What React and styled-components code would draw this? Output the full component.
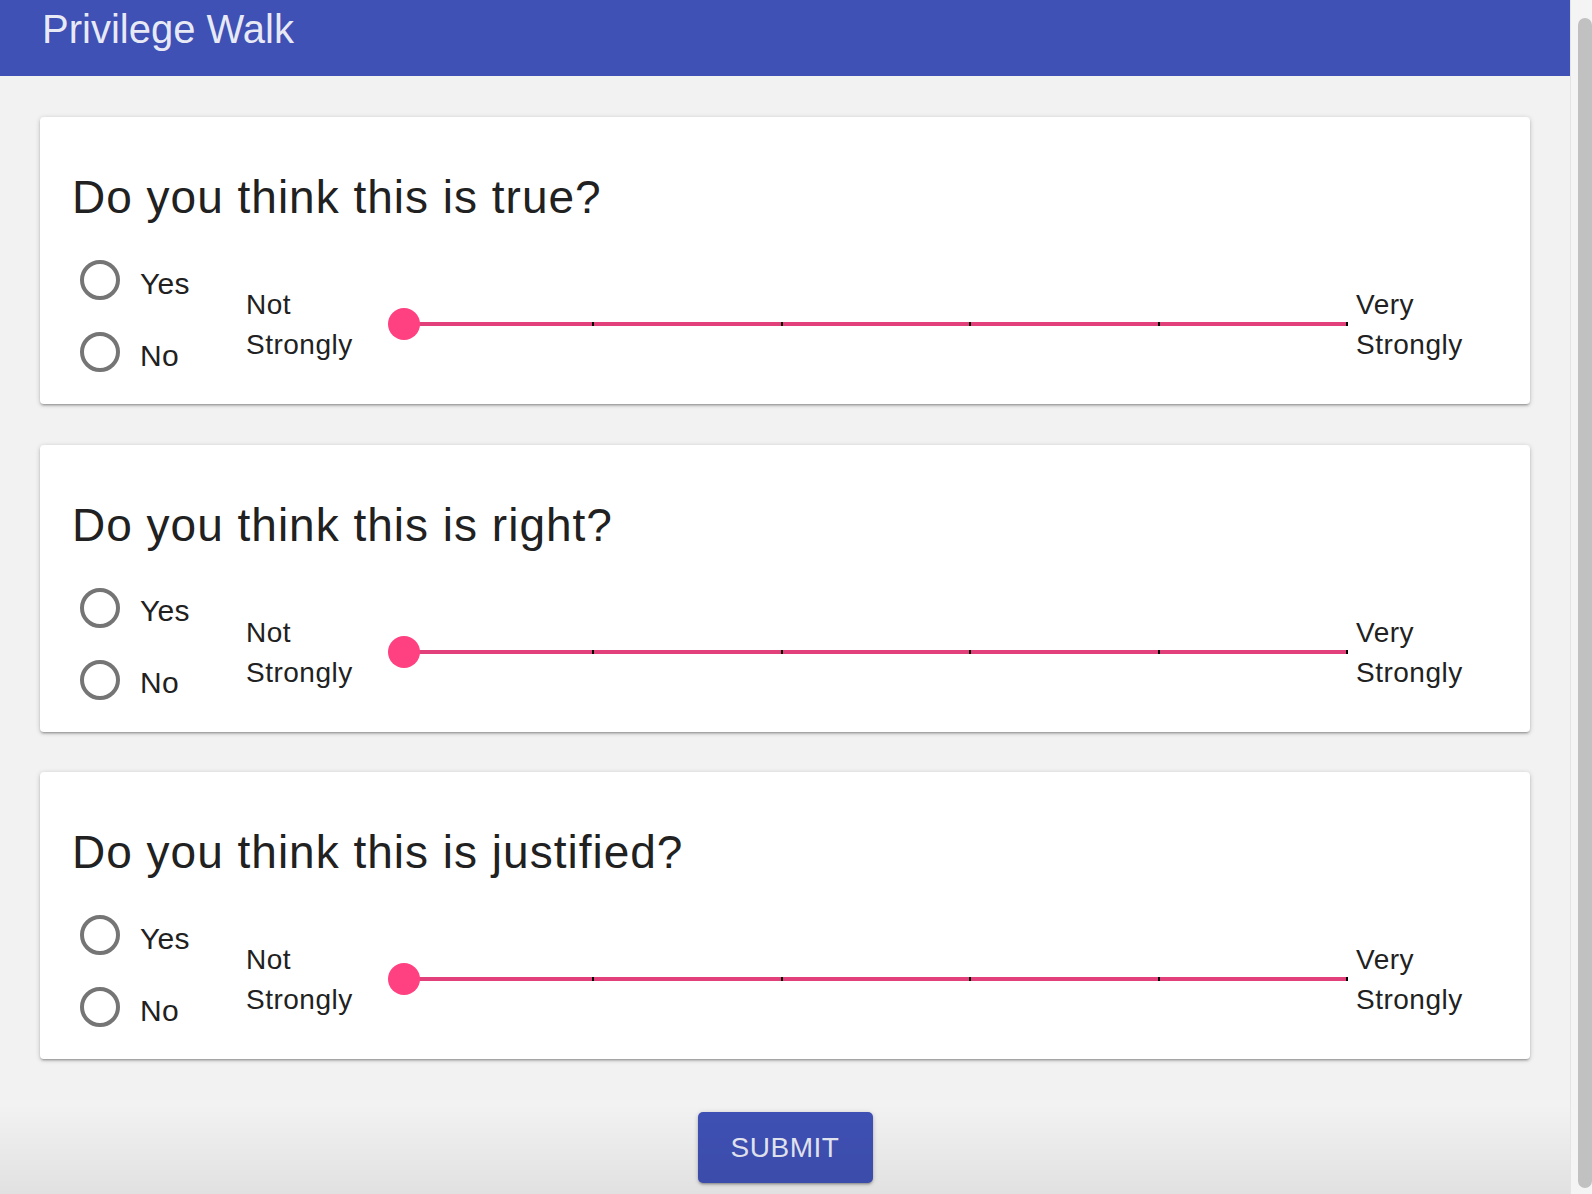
import React from "react";
import styled, { createGlobalStyle } from "styled-components";

const GlobalStyle = createGlobalStyle`
  html, body {
    margin: 0;
    padding: 0;
    height: 100%;
    overflow: hidden;
    background: #f2f2f2;
    font-family: "Liberation Sans", Arial, Helvetica, sans-serif;
  }
  #root { height: 100%; }
  * { box-sizing: border-box; }
`;

const Shell = styled.div`
  display: flex;
  height: 100vh;
`;

const Main = styled.div`
  flex: 1;
  min-width: 0;
  display: flex;
  flex-direction: column;
  background: #f2f2f2;
`;

const AppBar = styled.header`
  height: 76px;
  flex-shrink: 0;
  background: #3f51b5;
  padding: 5px 42px 0;
`;

const AppTitle = styled.h1`
  margin: 0;
  font-size: 40px;
  line-height: 48px;
  font-weight: 400;
  color: rgba(255, 255, 255, 0.89);
`;

const Content = styled.main`
  display: flex;
  flex-direction: column;
  gap: 40.5px;
  padding: 41px 40px 0;
`;

const Card = styled.section`
  background: #fff;
  border-radius: 4px;
  box-shadow: 0 1px 5px rgba(0, 0, 0, 0.2), 0 2px 2px rgba(0, 0, 0, 0.14),
    0 3px 1px -2px rgba(0, 0, 0, 0.12);
  padding: 53px 32px 16px;
`;

const Question = styled.h2`
  margin: 0;
  font-size: 46px;
  line-height: 54px;
  letter-spacing: 1px;
  font-weight: 400;
  color: #212121;
`;

const AnswerRow = styled.div`
  display: flex;
  align-items: flex-start;
  margin-top: 20px;
`;

const RadioGroup = styled.div`
  width: 174px;
  padding-left: 8px;
  display: flex;
  flex-direction: column;
`;

const RadioOption = styled.label`
  height: 72px;
  display: flex;
  align-items: center;
  gap: 20px;
`;

const RadioCircle = styled.span`
  width: 40px;
  height: 40px;
  border: 4px solid #757575;
  border-radius: 50%;
  flex-shrink: 0;
`;

const RadioText = styled.span`
  font-size: 30px;
  letter-spacing: 0.3px;
  padding-top: 7px;
  color: #212121;
`;

const ScaleLabel = styled.div`
  width: ${(p) => p.$width}px;
  flex-shrink: 0;
  margin-top: 41px;
  font-size: 28px;
  letter-spacing: 0.5px;
  line-height: 40px;
  color: #212121;
`;

const SliderWrap = styled.div`
  flex: 1;
  min-width: 0;
  margin-top: 64px;
  height: 32px;
  padding: 0 8px 0 16px;
  display: flex;
  align-items: center;
`;

const Track = styled.div`
  position: relative;
  flex: 1;
  height: 4px;
  background: #e2407a;
`;

const Tick = styled.span`
  position: absolute;
  top: 0;
  width: 2px;
  height: 4px;
  background: #000;
`;

const Thumb = styled.span`
  position: absolute;
  left: 0;
  top: 50%;
  width: 32px;
  height: 32px;
  border-radius: 50%;
  background: #ff4081;
  transform: translate(-50%, -50%);
`;

const ButtonRow = styled.div`
  display: flex;
  justify-content: center;
  padding-top: 53px;
`;

const SubmitButton = styled.button`
  width: 175px;
  height: 71px;
  border: none;
  border-radius: 5px;
  background: #3f51b5;
  color: rgba(255, 255, 255, 0.89);
  font-family: inherit;
  font-size: 28px;
  letter-spacing: 0.5px;
  font-weight: 400;
  text-transform: uppercase;
  box-shadow: 0 1px 5px rgba(0, 0, 0, 0.2), 0 2px 2px rgba(0, 0, 0, 0.14),
    0 3px 1px -2px rgba(0, 0, 0, 0.12);
  cursor: pointer;
`;

const BottomFade = styled.div`
  position: fixed;
  left: 0;
  right: 22px;
  bottom: 0;
  height: 90px;
  pointer-events: none;
  background: linear-gradient(to bottom, rgba(0, 0, 0, 0), rgba(0, 0, 0, 0.065));
`;

const ScrollTrack = styled.div`
  width: 22px;
  flex-shrink: 0;
  background: #f4f4f4;
  border-left: 1px solid #e4e4e4;
  padding: 18px 0 6px 7px;
  display: flex;
`;

const ScrollThumb = styled.div`
  flex: 1;
  background: #c1c1c1;
  border-radius: 7px;
`;

const STEPS = 5;

function Slider() {
  const ticks = [];
  for (let i = 1; i <= STEPS; i++) {
    const pct = (i / STEPS) * 100;
    ticks.push(
      <Tick key={i} style={{ left: `calc(${pct}% - ${i === STEPS ? 2 : 1}px)` }} />
    );
  }
  return (
    <SliderWrap>
      <Track>
        {ticks}
        <Thumb />
      </Track>
    </SliderWrap>
  );
}

function QuestionCard({ text }) {
  return (
    <Card>
      <Question>{text}</Question>
      <AnswerRow>
        <RadioGroup>
          <RadioOption>
            <RadioCircle />
            <RadioText>Yes</RadioText>
          </RadioOption>
          <RadioOption>
            <RadioCircle />
            <RadioText>No</RadioText>
          </RadioOption>
        </RadioGroup>
        <ScaleLabel $width={142}>
          Not
          <br />
          Strongly
        </ScaleLabel>
        <Slider />
        <ScaleLabel $width={142}>
          Very
          <br />
          Strongly
        </ScaleLabel>
      </AnswerRow>
    </Card>
  );
}

const QUESTIONS = [
  "Do you think this is true?",
  "Do you think this is right?",
  "Do you think this is justified?",
];

export default function App() {
  return (
    <>
      <GlobalStyle />
      <Shell>
        <Main>
          <AppBar>
            <AppTitle>Privilege Walk</AppTitle>
          </AppBar>
          <Content>
            {QUESTIONS.map((q) => (
              <QuestionCard key={q} text={q} />
            ))}
          </Content>
          <ButtonRow>
            <SubmitButton>Submit</SubmitButton>
          </ButtonRow>
          <BottomFade />
        </Main>
        <ScrollTrack>
          <ScrollThumb />
        </ScrollTrack>
      </Shell>
    </>
  );
}
